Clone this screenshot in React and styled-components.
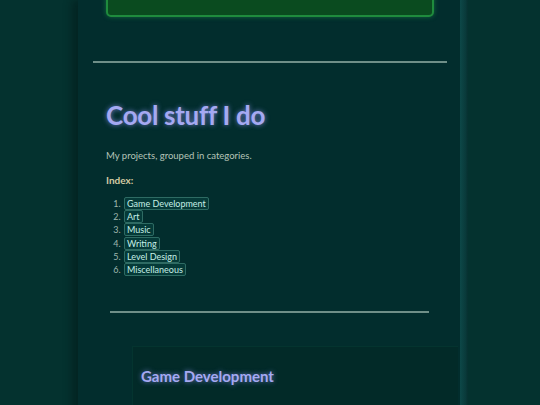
import React from "react";
import styled, { createGlobalStyle } from "styled-components";

const Global = createGlobalStyle`
  html, body { margin: 0; padding: 0; }
  body {
    background: #04322f;
    font-family: Lato, "Noto Sans", sans-serif;
    height: 405px;
    overflow: hidden;
  }
`;

const Column = styled.main`
  margin-left: 78px;
  width: 382px;
  min-height: 405px;
  background: #022d2d;
  box-shadow: -6px 0 8px rgba(0, 20, 20, 0.45);
  position: relative;
  display: flow-root;
`;

const Edge = styled.div`
  position: absolute;
  top: 0;
  bottom: 0;
  right: -8px;
  width: 8px;
  background: linear-gradient(90deg, #0d4848, #093a3a 70%, #06302f);
`;

const GreenPanel = styled.div`
  margin: -20px 26px 0 28px;
  height: 33px;
  background: #0a4b1f;
  border: 2px solid #1f8b3d;
  border-radius: 5px;
  box-shadow: 0 0 5px rgba(40, 180, 80, 0.45);
`;

const Rule = styled.hr`
  margin: ${(p) => p.$m};
  border: none;
  height: 2px;
  background: #6f8f88;
`;

const Intro = styled.section`
  padding: 0 28px;
`;

const Title = styled.h1`
  margin: 38px 0 0;
  font-size: 26px;
  font-weight: 700;
  letter-spacing: -0.3px;
  color: #a5a9f2;
  text-shadow: 0 0 5px rgba(150, 155, 255, 0.75);
  line-height: 28px;
`;

const Lead = styled.p`
  margin: 21px 0 0;
  font-size: 9.5px;
  color: #b5c4b8;
`;

const IndexLabel = styled.p`
  margin: 13px 0 0;
  font-size: 10px;
  font-weight: 700;
  color: #d2caa2;
`;

const IndexList = styled.ol`
  margin: 11px 0 0;
  padding-left: 17px;
  font-size: 9px;
  color: #9fb6ae;
  line-height: 13.2px;
`;

const Item = styled.li`
  padding-left: 1px;
`;

const Tag = styled.a`
  color: #c6efe6;
  text-decoration: none;
  border: 1px solid #2e6b63;
  background: #053a38;
  border-radius: 2px;
  padding: 0 2px;
  font-size: 9px;
`;

const Section = styled.section`
  margin: 33px 2px 0 54px;
  background: #022a28;
  border: 1px solid #04342f;
  border-right: none;
  padding: 20px 8px 40px;
`;

const SectionTitle = styled.h2`
  margin: 0;
  font-size: 15px;
  font-weight: 700;
  color: #a5a9f2;
  text-shadow: 0 0 5px rgba(150, 155, 255, 0.7);
`;

const categories = [
  "Game Development",
  "Art",
  "Music",
  "Writing",
  "Level Design",
  "Miscellaneous",
];

export default function App() {
  return (
    <>
      <Global />
      <Column>
        <Edge />
        <GreenPanel />
        <Rule $m="44px 13px 0 15px" />
        <Intro>
          <Title>Cool stuff I do</Title>
          <Lead>My projects, grouped in categories.</Lead>
          <IndexLabel>Index:</IndexLabel>
          <IndexList>
            {categories.map((c) => (
              <Item key={c}>
                <Tag href="#">{c}</Tag>
              </Item>
            ))}
          </IndexList>
        </Intro>
        <Rule $m="35px 31px 0 32px" />
        <Section>
          <SectionTitle>Game Development</SectionTitle>
        </Section>
      </Column>
    </>
  );
}
